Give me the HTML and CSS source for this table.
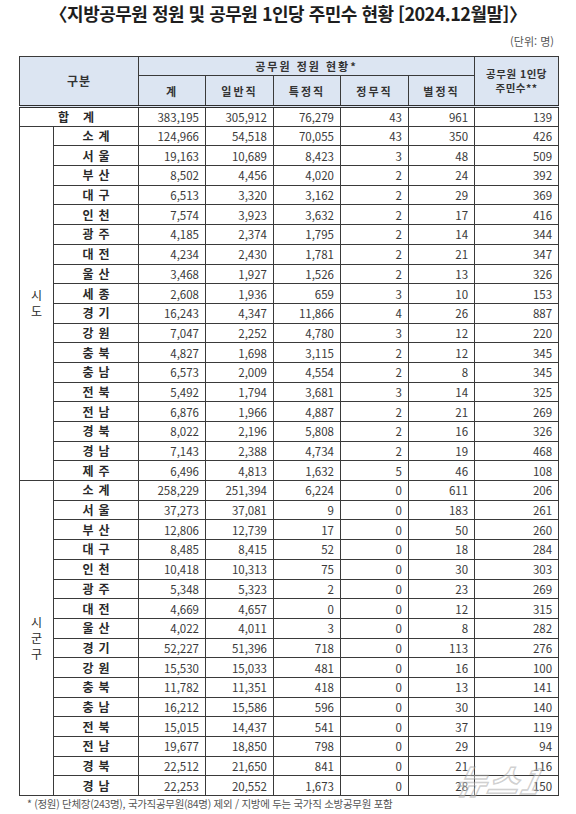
FILE: index.html
```html
<!DOCTYPE html>
<html lang="ko">
<head>
<meta charset="utf-8">
<link rel="stylesheet" href="styles.css">
</head>
<body>
<div class="page">
  <h1 class="title">〈지방공무원 정원 및 공무원 1인당 주민수 현황 [2024.12월말]〉</h1>
  <div class="unit">(단위: 명)</div>
  <table class="grid">
    <colgroup>
      <col class="c-grp"><col class="c-name"><col class="c-num"><col class="c-num2"><col class="c-num"><col class="c-num2"><col class="c-num3"><col class="c-last">
    </colgroup>
    <thead>
      <tr class="hr1"><th colspan="2" rowspan="2" class="gubun">구분</th><th colspan="5" class="span">공무원 정원 현황*</th><th rowspan="2" class="per">공무원 1인당<br>주민수**</th></tr>
      <tr class="hr2"><th>계</th><th>일반직</th><th>특정직</th><th>정무직</th><th>별정직</th></tr>
    </thead>
    <tbody>
      <tr class="sum"><td colspan="2" class="total">합계</td><td>383,195</td><td>305,912</td><td>76,279</td><td>43</td><td>961</td><td>139</td></tr>
      <tr><td rowspan="18" class="grp">시<br>도</td><td class="name">소계</td><td>124,966</td><td>54,518</td><td>70,055</td><td>43</td><td>350</td><td>426</td></tr>
      <tr><td class="name">서울</td><td>19,163</td><td>10,689</td><td>8,423</td><td>3</td><td>48</td><td>509</td></tr>
      <tr><td class="name">부산</td><td>8,502</td><td>4,456</td><td>4,020</td><td>2</td><td>24</td><td>392</td></tr>
      <tr><td class="name">대구</td><td>6,513</td><td>3,320</td><td>3,162</td><td>2</td><td>29</td><td>369</td></tr>
      <tr><td class="name">인천</td><td>7,574</td><td>3,923</td><td>3,632</td><td>2</td><td>17</td><td>416</td></tr>
      <tr><td class="name">광주</td><td>4,185</td><td>2,374</td><td>1,795</td><td>2</td><td>14</td><td>344</td></tr>
      <tr><td class="name">대전</td><td>4,234</td><td>2,430</td><td>1,781</td><td>2</td><td>21</td><td>347</td></tr>
      <tr><td class="name">울산</td><td>3,468</td><td>1,927</td><td>1,526</td><td>2</td><td>13</td><td>326</td></tr>
      <tr><td class="name">세종</td><td>2,608</td><td>1,936</td><td>659</td><td>3</td><td>10</td><td>153</td></tr>
      <tr><td class="name">경기</td><td>16,243</td><td>4,347</td><td>11,866</td><td>4</td><td>26</td><td>887</td></tr>
      <tr><td class="name">강원</td><td>7,047</td><td>2,252</td><td>4,780</td><td>3</td><td>12</td><td>220</td></tr>
      <tr><td class="name">충북</td><td>4,827</td><td>1,698</td><td>3,115</td><td>2</td><td>12</td><td>345</td></tr>
      <tr><td class="name">충남</td><td>6,573</td><td>2,009</td><td>4,554</td><td>2</td><td>8</td><td>345</td></tr>
      <tr><td class="name">전북</td><td>5,492</td><td>1,794</td><td>3,681</td><td>3</td><td>14</td><td>325</td></tr>
      <tr><td class="name">전남</td><td>6,876</td><td>1,966</td><td>4,887</td><td>2</td><td>21</td><td>269</td></tr>
      <tr><td class="name">경북</td><td>8,022</td><td>2,196</td><td>5,808</td><td>2</td><td>16</td><td>326</td></tr>
      <tr><td class="name">경남</td><td>7,143</td><td>2,388</td><td>4,734</td><td>2</td><td>19</td><td>468</td></tr>
      <tr><td class="name">제주</td><td>6,496</td><td>4,813</td><td>1,632</td><td>5</td><td>46</td><td>108</td></tr>
      <tr><td rowspan="16" class="grp">시<br>군<br>구</td><td class="name">소계</td><td>258,229</td><td>251,394</td><td>6,224</td><td>0</td><td>611</td><td>206</td></tr>
      <tr><td class="name">서울</td><td>37,273</td><td>37,081</td><td>9</td><td>0</td><td>183</td><td>261</td></tr>
      <tr><td class="name">부산</td><td>12,806</td><td>12,739</td><td>17</td><td>0</td><td>50</td><td>260</td></tr>
      <tr><td class="name">대구</td><td>8,485</td><td>8,415</td><td>52</td><td>0</td><td>18</td><td>284</td></tr>
      <tr><td class="name">인천</td><td>10,418</td><td>10,313</td><td>75</td><td>0</td><td>30</td><td>303</td></tr>
      <tr><td class="name">광주</td><td>5,348</td><td>5,323</td><td>2</td><td>0</td><td>23</td><td>269</td></tr>
      <tr><td class="name">대전</td><td>4,669</td><td>4,657</td><td>0</td><td>0</td><td>12</td><td>315</td></tr>
      <tr><td class="name">울산</td><td>4,022</td><td>4,011</td><td>3</td><td>0</td><td>8</td><td>282</td></tr>
      <tr><td class="name">경기</td><td>52,227</td><td>51,396</td><td>718</td><td>0</td><td>113</td><td>276</td></tr>
      <tr><td class="name">강원</td><td>15,530</td><td>15,033</td><td>481</td><td>0</td><td>16</td><td>100</td></tr>
      <tr><td class="name">충북</td><td>11,782</td><td>11,351</td><td>418</td><td>0</td><td>13</td><td>141</td></tr>
      <tr><td class="name">충남</td><td>16,212</td><td>15,586</td><td>596</td><td>0</td><td>30</td><td>140</td></tr>
      <tr><td class="name">전북</td><td>15,015</td><td>14,437</td><td>541</td><td>0</td><td>37</td><td>119</td></tr>
      <tr><td class="name">전남</td><td>19,677</td><td>18,850</td><td>798</td><td>0</td><td>29</td><td>94</td></tr>
      <tr><td class="name">경북</td><td>22,512</td><td>21,650</td><td>841</td><td>0</td><td>21</td><td>116</td></tr>
      <tr><td class="name">경남</td><td>22,253</td><td>20,552</td><td>1,673</td><td>0</td><td>28</td><td>150</td></tr>
    </tbody>
  </table>
  <p class="note">* (정원) 단체장(243명), 국가직공무원(84명) 제외 / 지방에 두는 국가직 소방공무원 포함</p>
  <div class="wm">뉴스1</div>
</div>
</body>
</html>
```

FILE: styles.css
```css
html, body {
  margin: 0;
  padding: 0;
  background: #ffffff;
}
.page {
  position: relative;
  width: 576px;
  height: 814px;
  overflow: hidden;
  font-family: "Noto Sans CJK KR", "Noto Sans", sans-serif;
  color: #333;
}
.title {
  margin: 0;
  height: 29px;
  line-height: 26px;
  font-size: 18px;
  font-weight: 700;
  text-align: center;
  letter-spacing: -0.5px;
  color: #1e1e1e;
}
.unit {
  height: 27px;
  line-height: 24px;
  font-size: 11px;
  text-align: right;
  padding-right: 22px;
  color: #555;
}
.grid {
  margin-left: 19px;
  width: 539px;
  table-layout: fixed;
  border-collapse: collapse;
  border: 1px solid #2e2e2e;
}
.c-grp { width: 34px; }
.c-name { width: 85px; }
.c-num { width: 67px; }
.c-num2 { width: 68px; }
.c-num3 { width: 66px; }
.c-last { width: 84px; }
.grid th, .grid td {
  border: 1px solid #3a3a3a;
  padding: 0;
}
.grid th {
  background: #dce5f2;
  font-size: 11px;
  font-weight: 700;
  color: #333;
  letter-spacing: 2px;
  text-align: center;
  line-height: 14px;
}
.hr1 { height: 19px; }
.hr2 { height: 31px; }
.grid thead tr:last-child th,
.grid th.gubun,
.grid th.per {
  border-bottom: 3px double #2e2e2e;
}
.grid th.gubun { letter-spacing: 1px; font-size: 12px; }
.grid th.per { letter-spacing: 0.5px; line-height: 14px; font-size: 10.5px; }
.grid tbody tr { height: 19.7px; }
.grid td {
  font-size: 11.5px;
  line-height: 14px;
  text-align: right;
  padding-right: 6px;
  color: #3a3a3a;
  white-space: nowrap;
}
.grid td.name, .grid td.total {
  text-align: center;
  padding-right: 0;
  font-weight: 700;
  font-size: 12px;
  color: #2a2a2a;
}
.grid td.name { letter-spacing: 5px; text-indent: 5px; }
.grid td.total { letter-spacing: 14px; text-indent: 8px; }
.grid td.grp {
  text-align: center;
  padding-right: 0;
  font-size: 12px;
  line-height: 16px;
  color: #2a2a2a;
}
.note {
  margin: 1px 0 0;
  padding-left: 27px;
  font-size: 10.5px;
  line-height: 14px;
  color: #555;
  letter-spacing: -0.3px;
}
.wm {
  position: absolute;
  left: 456px;
  top: 760px;
  font-size: 34px;
  line-height: 40px;
  font-weight: 700;
  font-style: italic;
  color: rgba(255, 255, 255, 0.35);
  -webkit-text-stroke: 1.5px rgba(150, 150, 150, 0.45);
  letter-spacing: 1px;
  transform: skewX(-12deg);
}
```
